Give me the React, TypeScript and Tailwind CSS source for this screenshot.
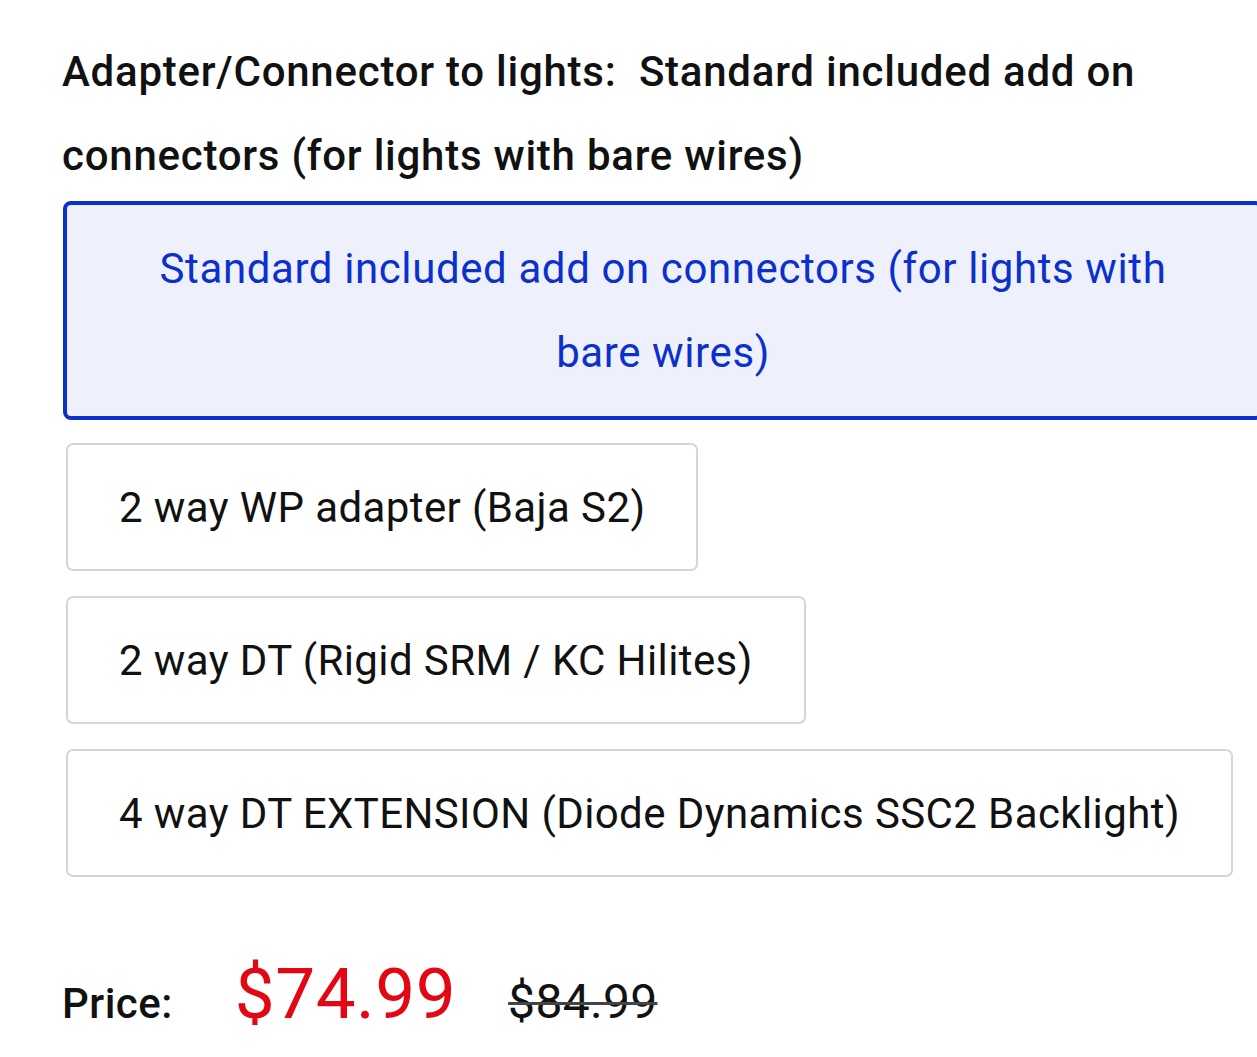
import { useState } from 'react'

const options = [
  'Standard included add on connectors (for lights with bare wires)',
  '2 way WP adapter (Baja S2)',
  '2 way DT (Rigid SRM / KC Hilites)',
  '4 way DT EXTENSION (Diode Dynamics SSC2 Backlight)',
]

export default function App() {
  const [selected, setSelected] = useState(0)

  return (
    <div className="w-[1257px] h-[1057px] overflow-hidden bg-white font-['Roboto',sans-serif] text-[#111]">
      <div className="pl-[62px] pt-[30px]">
        <h2 className="text-[42px] leading-[84px] font-medium tracking-[0.75px] w-[1120px]">
          Adapter/Connector to lights:&nbsp; {options[selected]}
        </h2>

        <div className="flex flex-col items-start gap-[25px] mt-[3px]">
          {options.map((opt, i) =>
            i === selected ? (
              <button
                key={i}
                onClick={() => setSelected(i)}
                className="w-[1200px] h-[219px] ml-[1px] -mb-[2px] px-[80px] rounded-[8px] border-[4px] border-[#0b30cc] bg-[#eef1fc] text-[#0b30cc] text-[42px] leading-[84px] tracking-[0.6px] text-center"
              >
                {opt}
              </button>
            ) : (
              <button
                key={i}
                onClick={() => setSelected(i)}
                className="h-[128px] ml-[4px] px-[51px] rounded-[7px] border-2 border-[#d6d6d6] bg-white text-[#111] text-[42px] tracking-[0.4px] text-left whitespace-nowrap"
              >
                {opt}
              </button>
            )
          )}
        </div>

        <div className="flex items-baseline mt-[64px]">
          <span className="text-[42px] font-medium tracking-[0.5px]">Price:</span>
          <span className="ml-[62px] text-[71px] tracking-[0.5px] text-[#e30613]">$74.99</span>
          <span className="ml-[52px] text-[48px] tracking-[0.3px] line-through decoration-[#444] decoration-[3px]">$84.99</span>
        </div>
      </div>
    </div>
  )
}
